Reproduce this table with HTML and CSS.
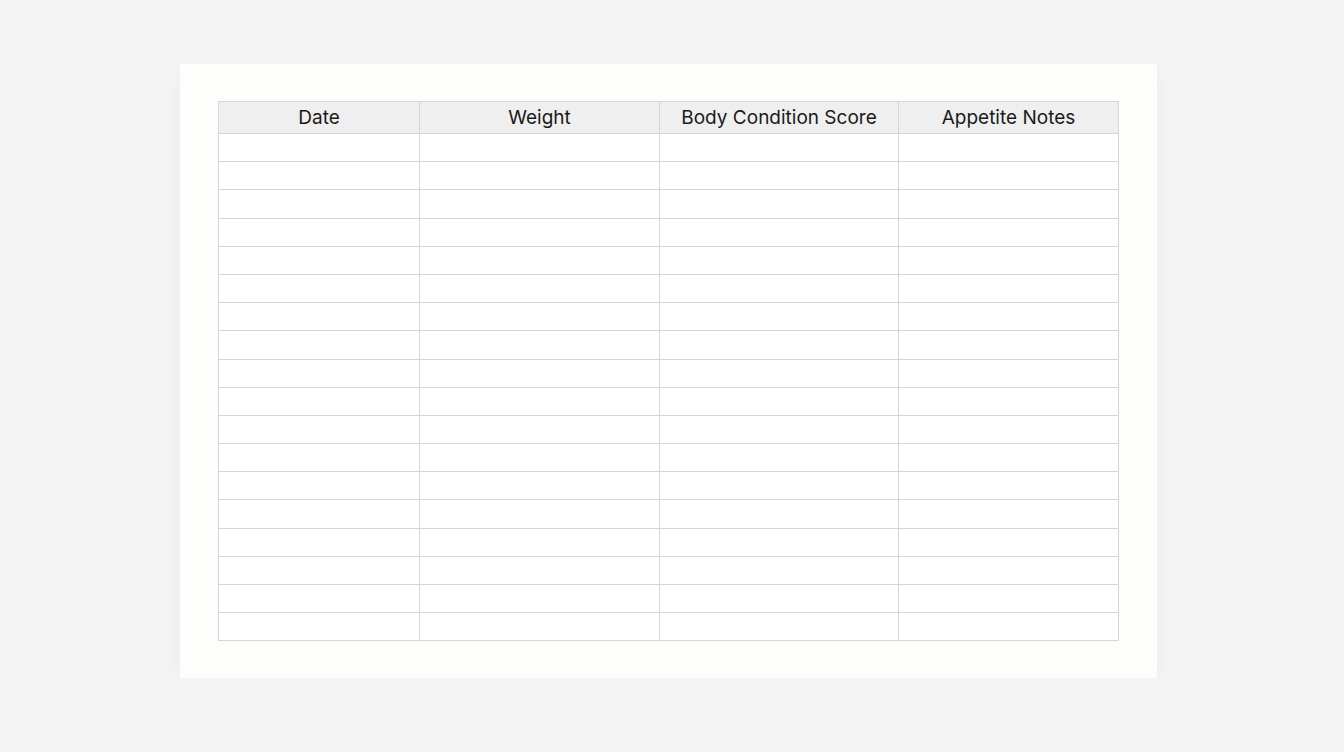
FILE: index.html
```html
<!DOCTYPE html>
<html lang="en">
<head>
  <meta charset="UTF-8">
  <meta name="viewport" content="width=device-width, initial-scale=1.0">
  <title>Weight Log</title>
  <link rel="stylesheet" href="styles.css">
</head>
<body>
  <div class="sheet">
    <table class="log-table">
      <colgroup>
        <col class="col-date">
        <col class="col-weight">
        <col class="col-score">
        <col class="col-notes">
      </colgroup>
      <thead>
        <tr>
          <th>Date</th>
          <th>Weight</th>
          <th>Body Condition Score</th>
          <th>Appetite Notes</th>
        </tr>
      </thead>
      <tbody id="log-body"></tbody>
    </table>
  </div>

  <script>
    var body = document.getElementById('log-body');
    for (var i = 0; i < 18; i++) {
      var tr = document.createElement('tr');
      for (var j = 0; j < 4; j++) {
        tr.appendChild(document.createElement('td'));
      }
      body.appendChild(tr);
    }
  </script>
</body>
</html>
```

FILE: styles.css
```css
body {
  font-family: Inter, 'Liberation Sans', Arial, sans-serif;
  margin: 0;
  padding: 64px 0 0 180px;
  background: #f4f4f4;
  color: #222;
}

.sheet {
  width: 977px;
  height: 614px;
  box-sizing: border-box;
  padding: 37px 39px 0 38px;
  background: #fdfdfc;
  box-shadow: 0 6px 18px rgba(0,0,0,0.04);
}

.log-table {
  width: 900px;
  border-collapse: collapse;
  table-layout: fixed;
}

.col-date { width: 201px; }
.col-weight { width: 240px; }
.col-score { width: 239px; }
.col-notes { width: 220px; }

.log-table th,
.log-table td {
  border: 1px solid #d6d6d6;
  padding: 0;
}

.log-table th {
  height: 30px;
  padding-bottom: 1px;
  background: #efefef;
  font-size: 19px;
  font-weight: 400;
  color: #1a1a1a;
  text-align: center;
}

.log-table td {
  height: 27.2px;
  background: #fff;
}
```
